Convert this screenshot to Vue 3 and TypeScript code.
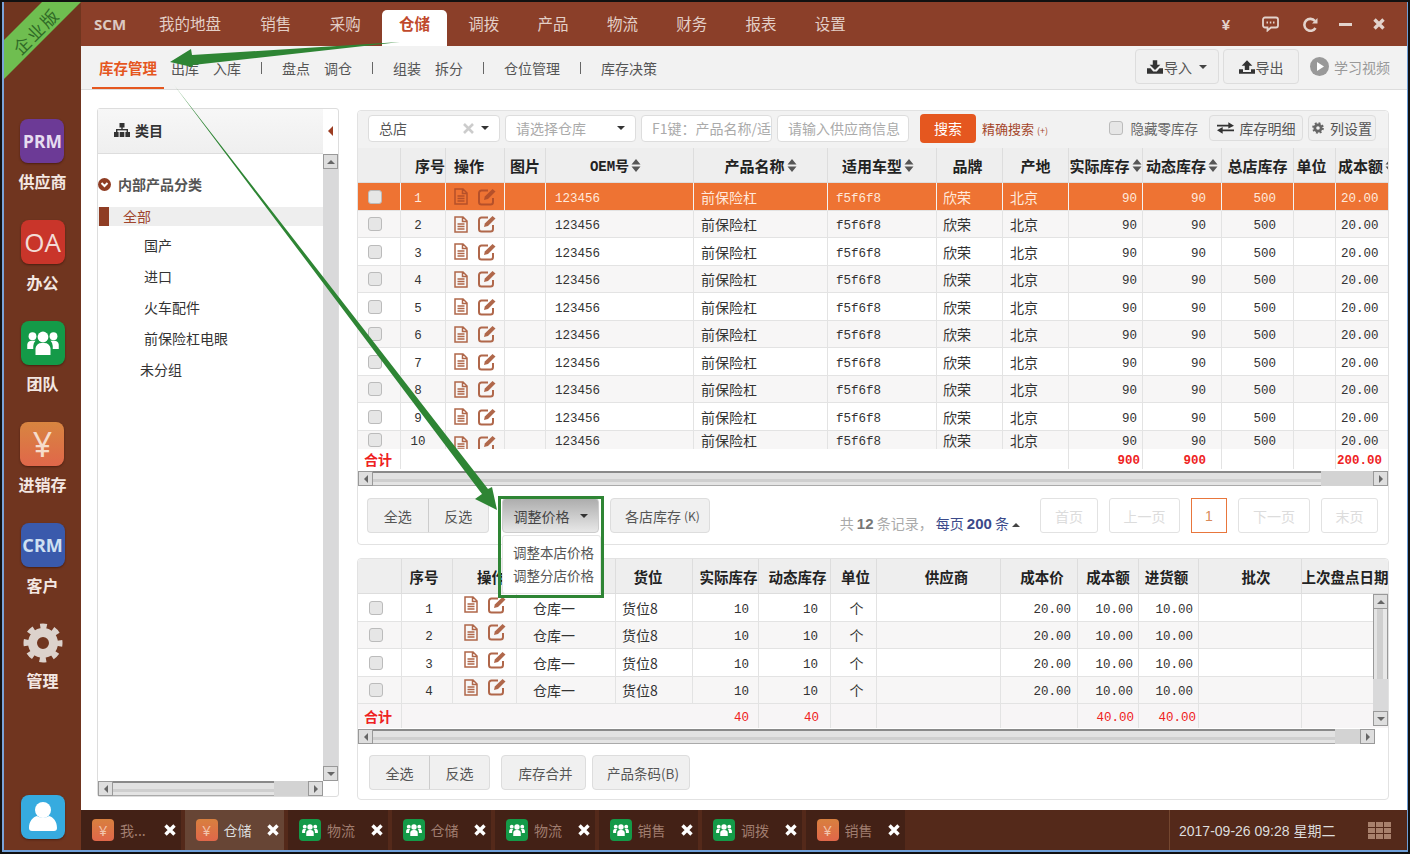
<script setup lang="ts">
interface Col {
  k: string
  label: string
  cls?: string
  sort?: boolean
}

const navItems = ['我的地盘', '销售', '采购', '仓储', '调拨', '产品', '物流', '财务', '报表', '设置']
const subGroups = [['出库', '入库'], ['盘点', '调仓'], ['组装', '拆分'], ['仓位管理'], ['库存决策']]
const leaves = [
  { label: '国产', cls: '' },
  { label: '进口', cls: '' },
  { label: '火车配件', cls: '' },
  { label: '前保险杠电眼', cls: '' },
  { label: '未分组', cls: 'leaf-out' },
]

const topCols: Col[] = [
  { k: 'check', label: '', cls: 'ctr chk' },
  { k: 'no', label: '序号', cls: 'ctr no num' },
  { k: 'ops', label: '操作', cls: 'ctr' },
  { k: 'pic', label: '图片', cls: 'ctr' },
  { k: 'oem', label: 'OEM号', cls: 'pl9 num', sort: true },
  { k: 'name', label: '产品名称', cls: 'pl7', sort: true },
  { k: 'car', label: '适用车型', cls: 'pl8 num', sort: true },
  { k: 'brand', label: '品牌', cls: 'pl6' },
  { k: 'origin', label: '产地', cls: 'pl7' },
  { k: 'real', label: '实际库存', cls: 'rt pr5 num', sort: true },
  { k: 'dyn', label: '动态库存', cls: 'rt pr15 num', sort: true },
  { k: 'total', label: '总店库存', cls: 'rt pr17 num' },
  { k: 'unit', label: '单位', cls: 'ctr' },
  { k: 'cost', label: '成本额', cls: 'pl5 num', sort: true },
]

const rows = Array.from({ length: 10 }, (_, i) => ({
  no: String(i + 1),
  oem: '123456',
  name: '前保险杠',
  car: 'f5f6f8',
  brand: '欣荣',
  origin: '北京',
  real: '90',
  dyn: '90',
  total: '500',
  cost: '20.00',
})) as Record<string, string>[]

const topTotal: Record<string, string> = { check: '合计', real: '900', dyn: '900', cost: '200.00' }
const topNoLine = ['no', 'ops', 'pic', 'oem', 'name', 'car', 'brand']

const lowCols: Col[] = [
  { k: 'check', label: '', cls: 'ctr chk' },
  { k: 'no', label: '序号', cls: 'ctr num pl4' },
  { k: 'ops', label: '操作', cls: 'ctr' },
  { k: 'wh', label: '', cls: 'pl16' },
  { k: 'loc', label: '货位', cls: 'pl6' },
  { k: 'real', label: '实际库存', cls: 'rt pr9 num' },
  { k: 'dyn', label: '动态库存', cls: 'rt pr12 num' },
  { k: 'unit', label: '单位', cls: 'ctr pl6' },
  { k: 'sup', label: '供应商' },
  { k: 'price', label: '成本价', cls: 'rt pr6 num' },
  { k: 'amt', label: '成本额', cls: 'rt pr5 num' },
  { k: 'buy', label: '进货额', cls: 'rt pr5 num' },
  { k: 'batch', label: '批次' },
  { k: 'date', label: '上次盘点日期' },
]

const lowRows = Array.from({ length: 4 }, (_, i) => ({
  no: String(i + 1),
  wh: '仓库一',
  loc: '货位8',
  real: '10',
  dyn: '10',
  unit: '个',
  price: '20.00',
  amt: '10.00',
  buy: '10.00',
})) as Record<string, string>[]

const lowTotal: Record<string, string> = { check: '合计', real: '40', dyn: '40', amt: '40.00', buy: '40.00' }
const lowNoLine = ['no', 'ops', 'wh', 'loc']

const pages = [
  { label: '首页', cls: 'w58' },
  { label: '上一页', cls: 'w71' },
  { label: '1', cls: 'cur' },
  { label: '下一页', cls: 'w72' },
  { label: '末页', cls: 'w57' },
]

const tasks = [
  { icon: 'yen', label: '我...', active: false },
  { icon: 'yen', label: '仓储', active: true },
  { icon: 'team', label: '物流', active: false },
  { icon: 'team', label: '仓储', active: false },
  { icon: 'team', label: '物流', active: false },
  { icon: 'team', label: '销售', active: false },
  { icon: 'team', label: '调拨', active: false },
  { icon: 'yen', label: '销售', active: false },
]
</script>

<template>
  <div class="page">
    <div class="window">
      <aside class="side">
        <div class="app"><div class="tile prm">PRM</div><div class="app-name">供应商</div></div>
        <div class="app"><div class="tile oa">OA</div><div class="app-name">办公</div></div>
        <div class="app">
          <div class="tile team">
            <svg width="36" height="36" viewBox="0 0 24 24" fill="#fff">
              <circle cx="12" cy="8" r="3.6" /><circle cx="5" cy="7.5" r="2.6" /><circle cx="19" cy="7.5" r="2.6" />
              <path d="M7 20v-4.500a4 4 0 0 1 4-3.500h2a4 4 0 0 1 4 3.500V20z" />
              <path d="M1.500 16v-3a3 3 0 0 1 3-2.500h2.500a5 5 0 0 0-1.500 3.500V16zM22.500 16v-3a3 3 0 0 0-3-2.500H17a5 5 0 0 1 1.500 3.500V16z" />
            </svg>
          </div>
          <div class="app-name">团队</div>
        </div>
        <div class="app"><div class="tile yen">¥</div><div class="app-name">进销存</div></div>
        <div class="app"><div class="tile crm">CRM</div><div class="app-name">客户</div></div>
        <div class="app app-gear">
          <svg width="40" height="40" viewBox="0 0 40 40" fill="none" stroke="#dcd2cc">
            <circle cx="20" cy="20" r="16" stroke-width="7" stroke-dasharray="6.280 6.280" stroke-dashoffset="3.140" />
            <circle cx="20" cy="20" r="10.500" stroke-width="9" />
          </svg>
          <div class="app-name">管理</div>
        </div>
        <div class="tile user">
          <svg width="30" height="34" viewBox="0 0 30 34" fill="#fff">
            <circle cx="15" cy="10" r="8" />
            <path d="M1 28c0-7 4-11 8-12 3 2 9 2 12 0 4 1 8 5 8 12 0 2-1 3-3 3H4c-2 0-3-1-3-3z" />
          </svg>
        </div>
      </aside>

      <div class="main">
        <header class="topbar">
          <div class="logo">SCM</div>
          <nav class="nav">
            <div v-for="n in navItems" :key="n" class="nav-item" :class="{ on: n === '仓储' }">{{ n }}</div>
          </nav>
          <div class="win-tools">
            <span class="tool-yen">¥</span>
            <svg class="t-chat" width="17" height="16" viewBox="0 0 17 16" fill="none" stroke="#e3d3cc" stroke-width="1.800">
              <path d="M3 1.500h11a2 2 0 0 1 2 2v6a2 2 0 0 1-2 2H9l-3.500 3v-3H3a2 2 0 0 1-2-2v-6a2 2 0 0 1 2-2z" />
              <path d="M4.500 6.500h1.500M7.800 6.500h1.500M11 6.500h1.500" />
            </svg>
            <svg class="t-ref" width="15" height="15" viewBox="0 0 15 15" fill="none" stroke="#e3d3cc" stroke-width="2.600">
              <path d="M12.500 11a6 6 0 1 1-.5-7" />
              <path d="M14.500 1v5.500H9z" fill="#e3d3cc" stroke="none" />
            </svg>
            <span class="t-min"></span>
            <svg class="t-close" width="12" height="12" viewBox="0 0 12 12" stroke="#e3d3cc" stroke-width="3.400">
              <path d="M1.500 1.500l9 9M10.500 1.500l-9 9" />
            </svg>
          </div>
        </header>

        <div class="subbar">
          <div class="sub-on">库存管理</div>
          <template v-for="(g, gi) in subGroups" :key="gi">
            <span v-if="gi > 0" class="sub-sep"></span>
            <span v-for="s in g" :key="s" class="sub-item">{{ s }}</span>
          </template>
          <div class="sub-right">
            <div class="btn sub-btn w84">
              <svg width="16" height="14" viewBox="0 0 18 15" fill="#333"><path d="M6.500 0h5v5H15l-6 6-6-6h3.500z" /><path d="M0 9h4l3 3.500h4L14 9h4v6H0z" /></svg>
              导入<i class="caret"></i>
            </div>
            <div class="btn sub-btn w76">
              <svg width="16" height="14" viewBox="0 0 18 15" fill="#333"><path d="M6.500 11h5V6H15L9 0 3 6h3.500z" /><path d="M0 10h4.500v3h9v-3H18v5H0z" /></svg>
              导出
            </div>
            <div class="learn">
              <svg width="19" height="19" viewBox="0 0 19 19"><circle cx="9.500" cy="9.500" r="9.500" fill="#999" /><path d="M7 5l7 4.500L7 14z" fill="#fff" /></svg>
              <span>学习视频</span>
            </div>
          </div>
        </div>

        <div class="content">
          <section class="cat-panel">
            <div class="cat-head">
              <div class="cat-title">
                <svg width="16" height="14" viewBox="0 0 16 14" fill="#333">
                  <rect x="5.500" y="0" width="5" height="4.500" /><rect x="7.300" y="4" width="1.400" height="3" />
                  <rect x="2" y="6" width="12" height="1.400" /><rect x="2" y="6" width="1.400" height="3" /><rect x="12.600" y="6" width="1.400" height="3" />
                  <rect x="0" y="9" width="4.600" height="5" /><rect x="5.700" y="9" width="4.600" height="5" /><rect x="11.400" y="9" width="4.600" height="5" />
                </svg>
                <span>类目</span>
              </div>
              <div class="cat-fold"><i class="tri tri-fold"></i></div>
            </div>
            <div class="cat-body">
              <div class="tree">
                <div class="tree-root">
                  <svg width="13" height="13" viewBox="0 0 13 13">
                    <circle cx="6.500" cy="6.500" r="6.500" fill="#8f3d24" />
                    <path d="M3.500 5l3 3 3-3" fill="none" stroke="#fff" stroke-width="2" />
                  </svg>
                  <span>内部产品分类</span>
                </div>
                <div class="tree-all"><i></i><span>全部</span></div>
                <div v-for="l in leaves" :key="l.label" class="leaf" :class="l.cls">{{ l.label }}</div>
              </div>
              <div class="vbar">
                <div class="sb-btn"><i class="tri tri-up"></i></div>
                <div class="vbar-fill"></div>
                <div class="sb-btn"><i class="tri tri-down"></i></div>
              </div>
            </div>
            <div class="cat-foot">
              <div class="hbar">
                <div class="sb-btn"><i class="tri tri-left"></i></div>
                <div class="thumb cat-thumb"></div>
                <div class="track"></div>
                <div class="sb-btn"><i class="tri tri-right"></i></div>
              </div>
            </div>
          </section>

          <div class="right-col">
            <section class="panel panel-top">
              <div class="toolbar">
                <div class="field w132 plain">
                  <span>总店</span>
                  <svg class="clear" width="11" height="11" viewBox="0 0 11 11" stroke="#ccc" stroke-width="2.600"><path d="M1 1l9 9M10 1l-9 9" /></svg>
                  <i class="caret dark"></i>
                </div>
                <div class="field w131"><span>请选择仓库</span><i class="caret dark"></i></div>
                <div class="field w131 tight">F1键：产品名称/适</div>
                <div class="field w132">请输入供应商信息</div>
                <div class="search">搜索</div>
                <div class="exact">精确搜索 <small>(+)</small></div>
                <div class="tool-right">
                  <label class="hide-zero"><i class="box"></i>隐藏零库存</label>
                  <div class="btn tool-btn w94">
                    <svg width="17" height="12" viewBox="0 0 18 12" fill="#333"><path d="M0 2.500h12V0l6 3.500-6 3V4.500H0z" /><path d="M18 7.500H6V5L0 8.500 6 12V9.500h12z" /></svg>
                    库存明细
                  </div>
                  <div class="btn tool-btn w68">
                    <svg width="12" height="12" viewBox="0 0 40 40" fill="none" stroke="#666">
                      <circle cx="20" cy="20" r="16" stroke-width="7" stroke-dasharray="6.280 6.280" />
                      <circle cx="20" cy="20" r="10.500" stroke-width="9" />
                    </svg>
                    列设置
                  </div>
                </div>
              </div>

              <div class="g-row top-grid head">
                <div v-for="c in topCols" :key="c.k" class="cell" :class="'h-' + c.k">
                  <span class="head-label" :class="{ mono: c.k === 'oem' }">{{ c.label }}</span>
                  <svg v-if="c.sort" class="sort" width="10" height="13" viewBox="0 0 10 13" fill="#555"><path d="M5 0l4.500 5.500H.5zM5 13L.5 7.500h9z" /></svg>
                </div>
              </div>
              <div class="body-top">
                <div
                  v-for="(r, i) in rows"
                  :key="i"
                  class="g-row top-grid data"
                  :class="{ active: i === 0, alt: i % 2 === 1, cut: i === 9 }"
                >
                  <div v-for="c in topCols" :key="c.k" class="cell" :class="c.cls">
                    <i v-if="c.k === 'check'" class="box"></i>
                    <div v-else-if="c.k === 'ops'" class="ops">
                      <svg class="ic" width="14" height="17" viewBox="0 0 14 17" fill="none" stroke="currentColor" stroke-width="1.500"><path d="M1 1h8l4 4v11H1zM8.500 1v4.500H13M3.500 8h7M3.500 10.500h7M3.500 13h7" /></svg>
                      <svg class="ic" width="18" height="18" viewBox="0 0 18 18" fill="none" stroke="currentColor" stroke-width="2"><path d="M15 10v4a2.500 2.500 0 0 1-2.500 2.500h-9A2.500 2.500 0 0 1 1 14V5a2.500 2.500 0 0 1 2.500-2.500H10" /><path d="M6 12l.8-3.500L14.500 1 17.500 3.500 10 11z" fill="currentColor" stroke="none" /></svg>
                    </div>
                    <template v-else>{{ r[c.k] }}</template>
                  </div>
                </div>
              </div>
              <div class="g-row top-grid total">
                <div
                  v-for="c in topCols"
                  :key="c.k"
                  class="cell"
                  :class="['t-' + c.k, { noline: topNoLine.includes(c.k), sum: c.k !== 'check' }]"
                >{{ topTotal[c.k] }}</div>
              </div>
              <div class="hbar hbar-top">
                <div class="sb-btn"><i class="tri tri-left"></i></div>
                <div class="thumb top-thumb"></div>
                <div class="track"></div>
                <div class="sb-btn"><i class="tri tri-right"></i></div>
              </div>

              <div class="actions">
                <div class="btn-group"><div class="btn">全选</div><div class="btn">反选</div></div>
                <div class="drop-wrap">
                  <div class="btn price-btn">调整价格<i class="caret dark"></i></div>
                  <div class="drop-menu">
                    <div>调整本店价格</div>
                    <div>调整分店价格</div>
                  </div>
                </div>
                <div class="btn store-btn">各店库存 <small>(K)</small></div>
                <div class="pager">
                  <div class="summary">
                    共 <b>12</b> 条记录，<span class="per">每页 <b>200</b> 条</span><i class="caret up"></i>
                  </div>
                  <div v-for="p in pages" :key="p.label" class="page-btn" :class="p.cls">{{ p.label }}</div>
                </div>
              </div>
            </section>

            <section class="panel panel-low">
              <div class="g-row low-grid head">
                <div v-for="c in lowCols" :key="c.k" class="cell" :class="'h-' + c.k"><span class="head-label">{{ c.label }}</span></div>
              </div>
              <div class="body-low">
                <div
                  v-for="(r, i) in lowRows"
                  :key="i"
                  class="g-row low-grid data"
                  :class="{ alt: i % 2 === 1 }"
                >
                  <div v-for="c in lowCols" :key="c.k" class="cell" :class="c.cls">
                    <i v-if="c.k === 'check'" class="box"></i>
                    <div v-else-if="c.k === 'ops'" class="ops raised">
                      <svg class="ic" width="14" height="17" viewBox="0 0 14 17" fill="none" stroke="currentColor" stroke-width="1.500"><path d="M1 1h8l4 4v11H1zM8.500 1v4.500H13M3.500 8h7M3.500 10.500h7M3.500 13h7" /></svg>
                      <svg class="ic" width="18" height="18" viewBox="0 0 18 18" fill="none" stroke="currentColor" stroke-width="2"><path d="M15 10v4a2.500 2.500 0 0 1-2.500 2.500h-9A2.500 2.500 0 0 1 1 14V5a2.500 2.500 0 0 1 2.500-2.500H10" /><path d="M6 12l.8-3.500L14.500 1 17.500 3.500 10 11z" fill="currentColor" stroke="none" /></svg>
                    </div>
                    <template v-else>{{ r[c.k] }}</template>
                  </div>
                </div>
                <div class="vbar low-vbar">
                  <div class="sb-btn"><i class="tri tri-up"></i></div>
                  <div class="vbar-thumb"></div>
                  <div class="vbar-fill"></div>
                  <div class="sb-btn"><i class="tri tri-down"></i></div>
                </div>
              </div>
              <div class="g-row low-grid total low-total">
                <div
                  v-for="c in lowCols"
                  :key="c.k"
                  class="cell"
                  :class="[c.cls, 't-' + c.k, { noline: lowNoLine.includes(c.k), red: c.k !== 'check' }]"
                >{{ lowTotal[c.k] }}</div>
              </div>
              <div class="hbar hbar-low">
                <div class="sb-btn"><i class="tri tri-left"></i></div>
                <div class="thumb low-thumb"></div>
                <div class="track"></div>
                <div class="sb-btn"><i class="tri tri-right"></i></div>
              </div>
              <div class="actions low-actions">
                <div class="btn-group"><div class="btn">全选</div><div class="btn">反选</div></div>
                <div class="btn merge-btn">库存合并</div>
                <div class="btn code-btn">产品条码(B)</div>
              </div>
            </section>
          </div>
        </div>

        <footer class="taskbar">
          <div v-for="(t, i) in tasks" :key="i" class="task" :class="{ on: t.active }">
            <div v-if="t.icon === 'yen'" class="task-ic ic-yen">¥</div>
            <div v-else class="task-ic ic-team">
              <svg width="18" height="18" viewBox="0 0 24 24" fill="#fff">
                <circle cx="12" cy="8" r="3.600" /><circle cx="5" cy="7.500" r="2.600" /><circle cx="19" cy="7.500" r="2.600" />
                <path d="M7 20v-4.500a4 4 0 0 1 4-3.500h2a4 4 0 0 1 4 3.500V20z" />
                <path d="M1.500 16v-3a3 3 0 0 1 3-2.500h2.500a5 5 0 0 0-1.500 3.500V16zM22.500 16v-3a3 3 0 0 0-3-2.500H17a5 5 0 0 1 1.500 3.500V16z" />
              </svg>
            </div>
            <span class="task-label">{{ t.label }}</span>
            <svg class="task-x" width="12" height="12" viewBox="0 0 12 12" stroke="#fff" stroke-width="3.400"><path d="M1.500 1.500l9 9M10.500 1.500l-9 9" /></svg>
          </div>
          <div class="clock">
            <span>2017-09-26 09:28 星期二</span>
            <div class="apps-grid"><i v-for="n in 9" :key="n"></i></div>
          </div>
        </footer>
      </div>
    </div>

    <!-- annotation layer drawn over the screenshot -->
    <svg class="notes" width="1410" height="854" viewBox="0 0 1410 854">
      <polygon points="4,40 42,2 81,2 4,79" fill="#6fbe50" />
      <polygon points="170,62 191,49 192,55 400,42 193,65 192,67" fill="#2e8534" />
      <polygon points="497,510 475,499 482,494 174,85 488,489 492,487" fill="#2e8534" />
      <rect x="499.500" y="497.500" width="103" height="99" fill="none" stroke="#2e8534" stroke-width="3" />
    </svg>
    <div class="ribbon-label">企业版</div>
  </div>
</template>

<style scoped>
.page {
  position: relative;
  width: 1410px;
  height: 854px;
  overflow: hidden;
  padding: 2px 0 0 2px;
  box-sizing: border-box;
  font-family: "Noto Sans CJK SC", "Liberation Sans", sans-serif;
  font-size: 14px;
  color: #333;
}
.window {
  display: flex;
  width: 1406px;
  height: 850px;
  box-sizing: border-box;
  border-left: 2px solid #7ba4d8;
  border-right: 1px solid #6f9fd8;
  border-bottom: 2px solid #6f9fd8;
  background: #fff;
}
.side {
  width: 77px;
  flex: none;
  display: flex;
  flex-direction: column;
  align-items: center;
  padding: 117px 0 11px;
  box-sizing: border-box;
  background: #70351f;
}
.app {
  height: 101px;
  display: flex;
  flex-direction: column;
  align-items: center;
}
.tile {
  width: 44px;
  height: 44px;
  flex: none;
  border-radius: 8px;
  display: flex;
  align-items: center;
  justify-content: center;
  color: #fff;
  box-shadow: 0 1px 2px rgba(40, 10, 0, 0.5);
}
.prm { background: #6c3a96; font: 700 17.500px "Noto Sans", sans-serif; color: #e6dcf0; }
.oa { background: #c9352a; font: 400 26px "Open Sans", sans-serif; color: #f3dcd6; }
.team { background: #149a48; }
.yen {
  background: linear-gradient(#d88540, #e0674a);
  font: 400 34px "Noto Sans", sans-serif;
  color: #f6dccb;
}
.crm { background: #3a5aac; font: 700 18px "Noto Sans", sans-serif; color: #cfe0f2; }
.user { background: #36abdf; margin-top: auto; }
.app-name {
  margin-top: 6px;
  height: 24px;
  line-height: 24px;
  font-size: 16px;
  font-weight: 700;
  color: #f3e7e2;
}
.app-gear { margin-top: -1px; }
.app-gear .app-name { margin-top: 5px; }

.main { flex: 1; min-width: 0; display: flex; flex-direction: column; }

.topbar {
  height: 44px;
  flex: none;
  display: flex;
  align-items: flex-end;
  padding-left: 13px;
  background: #8b3f29;
  color: #e3cfc7;
}
.logo { height: 44px; font: 700 15px/44px "Noto Sans", sans-serif; color: #dcc9c1; }
.nav { display: flex; gap: 4.300px; margin-left: 16px; }
.nav-item {
  padding: 0 17px;
  height: 36px;
  line-height: 27px;
  font-size: 15.500px;
  white-space: nowrap;
}
.nav-item:first-child { padding-right: 18px; }
.nav-item.on {
  background: #fff;
  border-radius: 5px 5px 0 0;
  color: #c0492c;
  font-weight: 700;
}
.win-tools {
  margin-left: auto;
  height: 44px;
  display: flex;
  align-items: center;
  padding-right: 22px;
}
.tool-yen { font: 700 15px "Liberation Sans", sans-serif; color: #e3d3cc; }
.t-chat { margin-left: 32px; }
.t-ref { margin-left: 24px; }
.t-min { width: 13px; height: 3px; margin-left: 21px; background: #e3d3cc; }
.t-close { margin-left: 21px; }

.subbar {
  height: 44px;
  flex: none;
  box-sizing: border-box;
  display: flex;
  align-items: center;
  gap: 14px;
  padding-left: 11px;
  background: #f2f2f2;
  border-bottom: 1px solid #ddd;
  color: #555;
}
.sub-on {
  height: 43px;
  line-height: 43px;
  padding: 0 7px;
  margin-right: -7px;
  box-sizing: border-box;
  font-size: 14.500px;
  font-weight: 700;
  color: #e5571f;
  border-bottom: 2px solid #e5571f;
}
.sub-item { white-space: nowrap; line-height: 42px; }
.sub-sep { width: 1px; height: 12px; margin: 0 6px; background: #666; }
.sub-right {
  margin-left: auto;
  margin-top: -2px;
  display: flex;
  align-items: center;
  gap: 4px;
  padding-right: 17px;
}
.btn {
  display: flex;
  align-items: center;
  justify-content: center;
  box-sizing: border-box;
  border: 1px solid #ddd;
  border-radius: 4px;
  background: #f0f0f0;
  color: #555;
  white-space: nowrap;
}
.sub-btn { height: 35px; gap: 1px; }
.w84 { width: 84px; }
.w76 { width: 76px; }
.caret {
  width: 0;
  height: 0;
  margin-left: 6px;
  border-left: 4px solid transparent;
  border-right: 4px solid transparent;
  border-top: 4px solid #444;
}
.caret.dark { border-top-color: #333; }
.caret.up { border-top: 0; border-bottom: 4px solid #444; margin-left: 3px; display: inline-block; vertical-align: 2px; }
.learn { display: flex; align-items: center; gap: 5px; margin-left: 7px; color: #999; }

.content {
  flex: 1;
  min-height: 0;
  display: flex;
  padding: 18px 0 0 16px;
  background: #fff;
}
.cat-panel {
  width: 242px;
  height: 689px;
  flex: none;
  box-sizing: border-box;
  display: flex;
  flex-direction: column;
  border: 1px solid #ddd;
  border-radius: 3px;
}
.cat-head { height: 45px; flex: none; display: flex; }
.cat-title {
  width: 225px;
  display: flex;
  align-items: center;
  gap: 5px;
  padding: 0 0 3px 16px;
  box-sizing: border-box;
  background: linear-gradient(#f7f7f7, #efefef);
  border-bottom: 1px solid #ddd;
  font-weight: 700;
}
.cat-fold { flex: 1; display: flex; align-items: center; justify-content: center; padding-bottom: 2px; }
.cat-body { flex: 1; min-height: 0; display: flex; }
.tree { width: 225px; box-sizing: border-box; padding-top: 19px; }
.tree-root {
  height: 22px;
  display: flex;
  align-items: center;
  gap: 7px;
  font-weight: 700;
  color: #555;
}
.tree-all {
  height: 19px;
  margin-top: 12px;
  display: flex;
  align-items: center;
  background: #eee;
  color: #a0452e;
}
.tree-all i { width: 10px; height: 19px; margin-left: 1px; background: #8f3d24; }
.tree-all span { margin: -2px 0 0 14px; }
.leaf { height: 31px; line-height: 31px; padding-left: 46px; color: #333; }
.tree-all + .leaf { margin-top: 4px; }
.leaf-out { padding-left: 42px; }
.vbar {
  width: 15px;
  display: flex;
  flex-direction: column;
  background: #d9d9da;
}
.vbar-fill { flex: 1; }
.sb-btn {
  width: 15px;
  height: 15px;
  flex: none;
  box-sizing: border-box;
  display: flex;
  align-items: center;
  justify-content: center;
  background: #dedede;
  border: 1px solid #999;
}
.tri { width: 0; height: 0; display: block; border: 4px solid transparent; }
.tri-up { border-top: 0; border-bottom-color: #666; }
.tri-down { border-bottom: 0; border-top-color: #666; }
.tri-left { border-left: 0; border-right-color: #666; }
.tri-right { border-right: 0; border-left-color: #666; }
.tri-fold { border-width: 5px; border-left-width: 0; border-right-color: #9c3d22; }
.cat-foot { height: 15px; flex: none; }
.cat-foot .hbar { width: 225px; }
.hbar {
  height: 15px;
  display: flex;
  flex: none;
  background: #d3d3d3;
}
.thumb {
  flex: none;
  box-sizing: border-box;
  border-top: 2px solid #8a8a8a;
  border-bottom: 1px solid #aaa;
  background: linear-gradient(#e2e2e2 0 50%, #cfcfcf 50% 75%, #e4e4e4 75%);
}
.track { flex: 1; }
.cat-thumb { width: 161px; }

.right-col {
  width: 1032px;
  margin: 2px 0 0 18px;
  flex: none;
  display: flex;
  flex-direction: column;
  gap: 13px;
}
.panel {
  box-sizing: border-box;
  border: 1px solid #e2e2e2;
  border-radius: 4px;
  background: #fff;
}
.panel-top { height: 435px; position: relative; }
.panel-low { height: 242px; }
.toolbar {
  height: 37px;
  box-sizing: border-box;
  display: flex;
  align-items: center;
  gap: 5px;
  padding: 0 0 3px 10px;
  background: #f2f2f2;
  border-radius: 4px 4px 0 0;
}
.field {
  height: 27px;
  box-sizing: border-box;
  display: flex;
  align-items: center;
  padding: 0 10px;
  background: #fff;
  border: 1px solid #ddd;
  border-radius: 4px;
  color: #aaa;
  white-space: nowrap;
  overflow: hidden;
}
.field.tight { padding-right: 0; }
.field .caret { margin-left: auto; }
.field.plain { color: #555; }
.field.plain .clear { margin-left: auto; }
.field.plain .caret { margin-left: 7px; }
.w132 { width: 132px; flex: none; }
.w131 { width: 131px; flex: none; }
.search {
  width: 56px;
  height: 29px;
  margin-left: 6px;
  flex: none;
  display: flex;
  align-items: center;
  justify-content: center;
  border-radius: 4px;
  background: #e5571f;
  color: #fff;
}
.exact { margin-left: 1px; font-size: 13px; color: #a5472c; white-space: nowrap; }
.exact small { font-size: 9px; }
.tool-right { margin-left: auto; display: flex; align-items: center; gap: 5px; padding-right: 12px; }
.hide-zero { display: flex; align-items: center; gap: 8px; margin-right: 6px; font-size: 13.500px; color: #666; }
.tool-btn { height: 26px; gap: 6px; }
.w94 { width: 94px; }
.w68 { width: 68px; }
.box {
  width: 14px;
  height: 14px;
  display: block;
  flex: none;
  box-sizing: border-box;
  border: 1px solid #bbb;
  border-radius: 3px;
  background: #e6e6e6;
}

.g-row { display: grid; }
.top-grid { grid-template-columns: 43px 45px 59px 41px 148px 134px 109px 66px 66px 74px 79px 72px 42px 52px; }
.low-grid { grid-template-columns: 44px 51px 64px 99px 77px 66px 72px 46px 124px 77px 61px 60px 103px 86px; }
.cell {
  display: flex;
  align-items: center;
  box-sizing: border-box;
  min-width: 0;
  overflow: hidden;
  white-space: nowrap;
  border-right: 1px solid #e3e3e3;
  border-bottom: 1px solid #e3e3e3;
}
.cell:last-child { border-right: 0; }
.head { height: 35px; background: #eee; }
.panel-low .head { border-radius: 4px 4px 0 0; }
.head .cell { justify-content: center; gap: 2px; border-color: #ddd; }
.head-label { font-weight: 700; color: #222; }
.top-grid .head-label { font-size: 15px; }
.low-grid .head-label { font-size: 14.500px; }
.top-grid .head-label.mono { font-family: "Liberation Mono", "Noto Sans CJK SC", monospace; font-size: 14px; }
.top-grid .h-no { padding-left: 14px; }
.top-grid .h-ops { padding-right: 12px; }
.top-grid .h-oem { padding-right: 8px; }
.top-grid .h-car { padding-right: 8px; }
.top-grid .h-brand { padding-right: 4px; }
.top-grid .h-unit { padding-right: 6px; }
.top-grid .h-cost { justify-content: flex-start; padding-left: 2px; }
.low-grid .h-no { padding-right: 6px; }
.low-grid .h-ops { padding-left: 14px; }
.low-grid .h-loc { padding-right: 12px; }
.low-grid .h-real, .low-grid .h-dyn, .low-grid .h-price { padding-left: 6px; }
.low-grid .h-unit { padding-left: 4px; }
.low-grid .h-sup { padding-left: 16px; }
.low-grid .h-buy { padding-right: 4px; }
.low-grid .h-batch { padding-left: 12px; }
.sort { flex: none; }
.body-top { height: 266px; overflow: hidden; }
.data { height: 27px; color: #333; }
.data:nth-child(odd) { height: 28px; }
.data.alt { background: #f7f6f6; }
.data.active { background: #ee7333; color: #ffe9dc; }
.data.active .ic { color: #b5502a; }
.data.active .cell { border-color: #f4f4f4; border-bottom-color: #e3e3e3; }
.data.cut { height: 18px; }
.data.cut .cell { align-items: flex-start; border-bottom: 0; line-height: 18px; }
.data.cut .box { margin-top: 2px; }
.data.cut .ops { margin-top: 4px; }
.data.cut .num { padding-top: 2px; }
.ctr { justify-content: center; }
.rt { justify-content: flex-end; }
.chk { padding-right: 8px; }
.no { padding-right: 10px; }
.num { font-family: "Liberation Mono", monospace; font-size: 12.500px; padding-top: 4px; }
.pl4 { padding-left: 4px; }
.pl5 { padding-left: 5px; }
.pl6 { padding-left: 6px; }
.pl7 { padding-left: 7px; }
.pl8 { padding-left: 8px; }
.pl9 { padding-left: 9px; }
.pl16 { padding-left: 16px; }
.pr5 { padding-right: 5px; }
.pr6 { padding-right: 6px; }
.pr9 { padding-right: 9px; }
.pr12 { padding-right: 12px; }
.pr15 { padding-right: 15px; }
.pr17 { padding-right: 17px; }
.ops { display: flex; align-items: center; gap: 10px; color: #b0674a; }
.ops.raised { margin-top: -6px; }
.ic { flex: none; display: block; }

.total { height: 20px; background: #fff; }
.total .cell { border-bottom: 0; font-weight: 700; }
.total .t-check { color: #e22; font-size: 14px; padding: 0 0 0 6px; justify-content: flex-start; }
.total .noline { border-right: 0; }
.sum {
  justify-content: flex-end;
  padding-top: 3px;
  font-family: "Liberation Mono", monospace;
  font-size: 12.500px;
  color: #e22;
}
.total .t-real { padding-right: 2px; }
.total .t-dyn { padding-right: 15px; }
.total .t-cost { justify-content: flex-start; padding-left: 1px; }
.hbar-top { margin-top: 2px; }
.top-thumb { width: 948px; }

.actions {
  display: flex;
  align-items: flex-start;
  padding: 12px 0 0 9px;
}
.btn-group { display: flex; width: 122px; }
.btn-group .btn { flex: 1; height: 35px; }
.btn-group .btn:first-child { border-radius: 4px 0 0 4px; border-right: 1px solid #ccc; }
.btn-group .btn:last-child { border-radius: 0 4px 4px 0; border-left: 0; }
.drop-wrap { position: relative; margin-left: 13px; }
.price-btn {
  width: 97px;
  height: 35px;
  border-color: #ccc;
  background: linear-gradient(#adadad, #e8e8e8);
  color: #444;
}
.price-btn .caret { margin-left: 10px; }
.drop-menu {
  position: absolute;
  left: 0;
  top: 37px;
  z-index: 5;
  width: 99px;
  height: 59px;
  box-sizing: border-box;
  padding: 5px 0 0 10px;
  background: #fff;
  border: 1px solid #e5e5e5;
  border-radius: 3px;
  color: #555;
  font-size: 13.500px;
  line-height: 23px;
  white-space: nowrap;
}
.store-btn { width: 100px; height: 35px; margin-left: 11px; padding-left: 5px; }
.store-btn small { font-size: 12px; margin-left: 3px; }
.pager { margin-left: auto; display: flex; align-items: flex-start; gap: 11px; padding-right: 10px; }
.summary { margin: 13px 9px 0 0; font-size: 14px; color: #aaa; white-space: nowrap; line-height: 24px; }
.summary b { font: 700 15px "Liberation Sans", sans-serif; color: #777; }
.per { color: #3b4a8a; margin-left: 3px; }
.per b { color: #3b4a8a; }
.page-btn {
  height: 35px;
  box-sizing: border-box;
  display: flex;
  align-items: center;
  justify-content: center;
  border: 1px solid #e2e2e2;
  border-radius: 3px;
  color: #dcdcdc;
}
.w58 { width: 58px; }
.w71 { width: 71px; }
.w72 { width: 72px; }
.w57 { width: 57px; }
.page-btn.cur { width: 36px; border-color: #e8763c; border-radius: 0; color: #d98a5a; font: 400 14px "Liberation Sans", sans-serif; }

.body-low { position: relative; height: 110px; }
.low-vbar {
  position: absolute;
  right: 0;
  top: 0;
  height: 132px;
  z-index: 2;
}
.vbar-thumb {
  height: 70px;
  background: linear-gradient(90deg, #e4e4e4 0 25%, #cfcfcf 25% 70%, #e8e8e8 70%);
  border-left: 1px solid #999;
  border-right: 1px solid #999;
}
.low-total { height: 24px; background: #f7f5f6; }
.low-total .cell { font-weight: 400; }
.low-total .t-check { font-weight: 700; }
.red { color: #e22; font-weight: 400; }
.low-total .t-real { padding-right: 9px; }
.low-total .t-dyn { padding-right: 11px; }
.low-total .t-amt { padding-right: 4px; }
.low-total .t-buy { padding-right: 2px; }
.hbar-low { width: 1017px; margin-top: 1px; }
.low-thumb { width: 962px; }
.low-actions { padding: 11px 0 0 11px; }
.low-actions .btn-group { width: 121px; }
.merge-btn { width: 85px; height: 35px; margin-left: 11px; font-size: 13.500px; padding-left: 4px; }
.code-btn { width: 98px; height: 35px; margin-left: 6px; font-size: 13.500px; padding-left: 4px; }

.taskbar {
  height: 40px;
  flex: none;
  display: flex;
  gap: 4px;
  background: #54291a;
}
.task {
  width: 99.500px;
  flex: none;
  box-sizing: border-box;
  display: flex;
  align-items: center;
  padding: 0 5px 0 11px;
  background: #432116;
  color: #a07d6f;
}
.task.on { background: #674535; color: #ddd; }
.task-ic {
  width: 22px;
  height: 22px;
  flex: none;
  display: flex;
  align-items: center;
  justify-content: center;
  border-radius: 4px;
}
.ic-yen { background: linear-gradient(#d8803f, #e0674a); color: #f2c6ae; font: 400 15px "Noto Sans", sans-serif; }
.ic-team { background: #149a48; }
.task-label { margin-left: 6px; white-space: nowrap; }
.task-x { margin-left: auto; }
.clock {
  margin-left: auto;
  width: 238px;
  box-sizing: border-box;
  display: flex;
  align-items: center;
  padding-left: 9px;
  border-left: 1px solid #74462f;
  color: #ddd;
  font: 400 14px "Liberation Sans", "Noto Sans CJK SC", sans-serif;
  white-space: nowrap;
}
.apps-grid {
  display: grid;
  grid-template-columns: repeat(3, 7px);
  grid-template-rows: repeat(3, 5px);
  gap: 1px;
  margin-left: auto;
  margin-right: 16px;
}
.apps-grid i { background: #a8806c; }

.notes { position: absolute; left: 0; top: 0; z-index: 10; pointer-events: none; }
.ribbon-label {
  position: absolute;
  left: 6px;
  top: 21px;
  width: 60px;
  z-index: 11;
  text-align: center;
  font-size: 17px;
  line-height: 20px;
  letter-spacing: 2px;
  color: #2f6b27;
  white-space: nowrap;
  transform: rotate(-45deg);
}
</style>

<style>
html, body {
  margin: 0;
  background: #111;
  overflow: hidden;
}
</style>
